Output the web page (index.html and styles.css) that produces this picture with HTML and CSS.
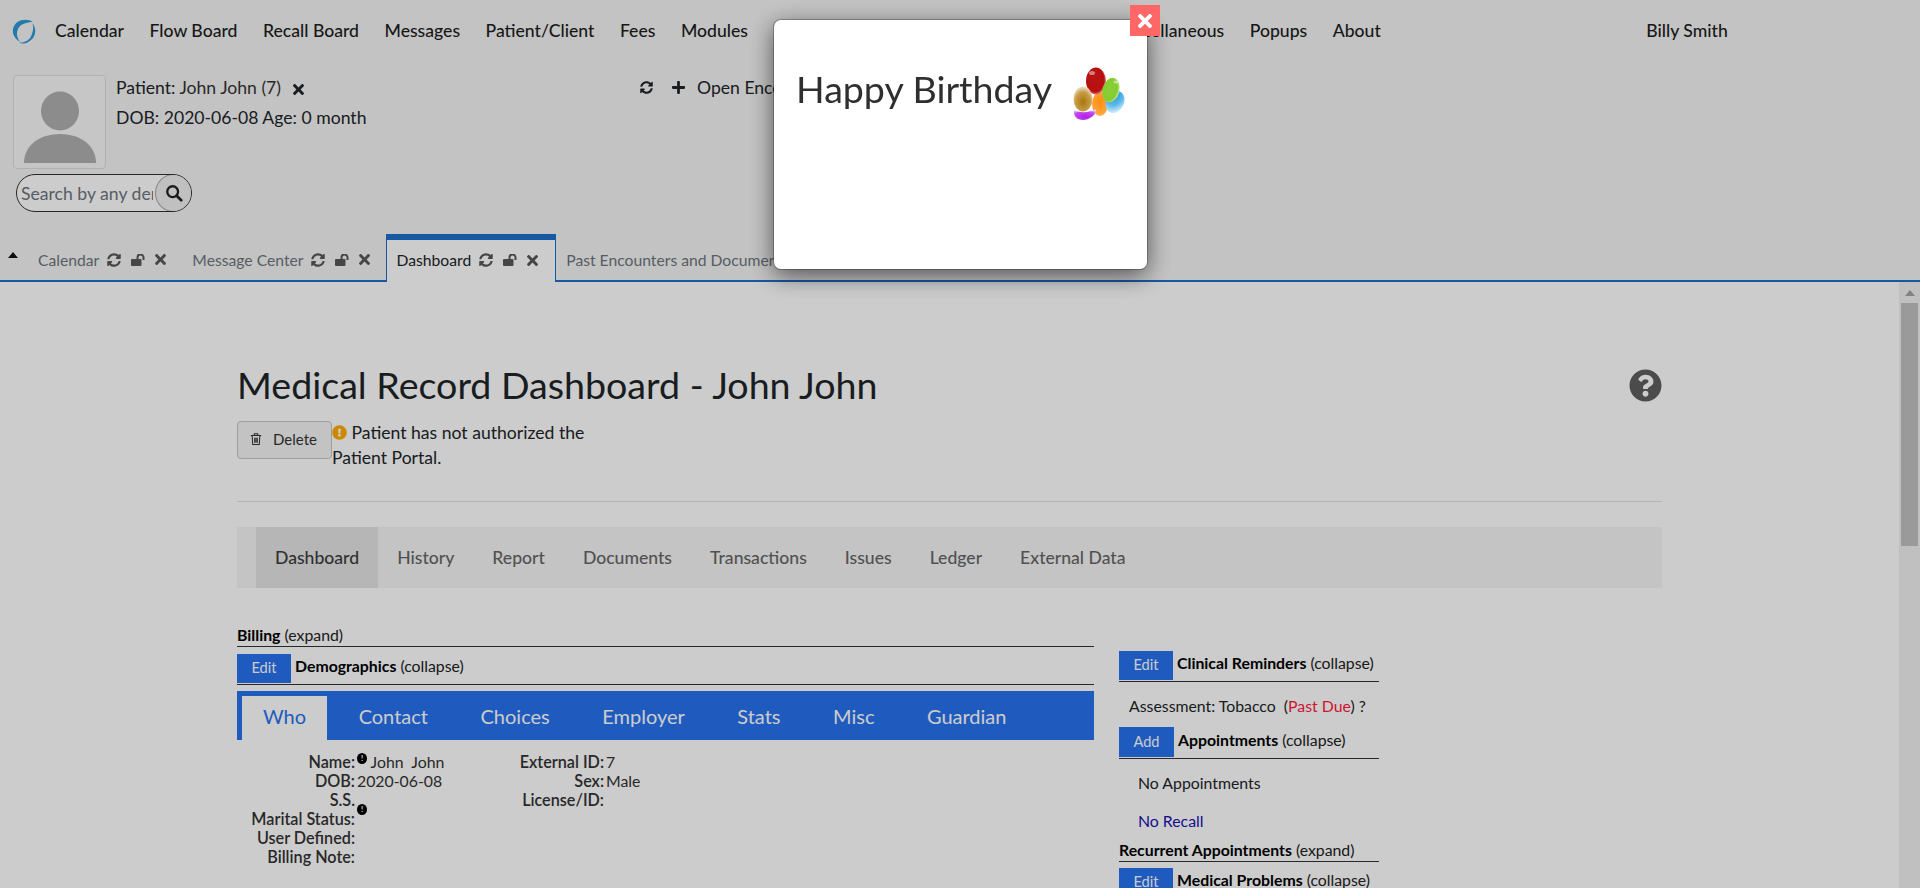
FILE: index.html
```html
<!DOCTYPE html>
<html lang="en">
<head>
    <meta charset="UTF-8">
    <meta name="viewport" content="width=device-width, initial-scale=1.0">
    <title>OpenEMR</title>
    <link rel="stylesheet" href="styles.css">
</head>
<body>
    <svg class="icon-defs" width="0" height="0">
        <symbol id="i-times" viewBox="0 80 352 352"><path d="M242.72 256l100.07-100.07c12.28-12.28 12.28-32.19 0-44.48l-22.24-22.24c-12.28-12.28-32.19-12.28-44.48 0L176 189.28 75.93 89.21c-12.28-12.28-32.19-12.28-44.48 0L9.21 111.45c-12.28 12.28-12.28 32.19 0 44.48L109.28 256 9.21 356.07c-12.28 12.28-12.28 32.19 0 44.48l22.24 22.24c12.28 12.28 32.2 12.28 44.48 0L176 322.72l100.07 100.07c12.28 12.28 32.2 12.28 44.48 0l22.24-22.24c12.28-12.28 12.28-32.19 0-44.48L242.72 256z"/></symbol>
        <symbol id="i-sync" viewBox="0 0 512 512"><path d="M370.72 133.28C339.458 104.008 298.888 87.962 255.848 88c-77.458.068-144.328 53.178-162.791 126.85-1.344 5.363-6.122 9.15-11.651 9.15H24.103c-7.498 0-13.194-6.807-11.807-14.176C33.933 94.924 134.813 8 256 8c66.448 0 126.791 26.136 171.315 68.685L463.03 40.97C478.149 25.851 504 36.559 504 57.941V192c0 13.255-10.745 24-24 24H345.941c-21.382 0-32.09-25.851-16.971-40.971l41.75-41.749zM32 296h134.059c21.382 0 32.09 25.851 16.971 40.971l-41.75 41.75c31.262 29.273 71.835 45.319 114.876 45.28 77.418-.07 144.315-53.144 162.787-126.849 1.344-5.363 6.122-9.15 11.651-9.15h57.304c7.498 0 13.194 6.807 11.807 14.176C478.067 417.076 377.187 504 256 504c-66.448 0-126.791-26.136-171.315-68.685L48.97 471.03C33.851 486.149 8 475.441 8 454.059V320c0-13.255 10.745-24 24-24z"/></symbol>
        <symbol id="i-unlock" viewBox="0 0 15 12"><rect x="0" y="5" width="10.500" height="7" rx="1"/><path d="M6.500 5.500V3.500a3 3 0 0 1 6 0V6" fill="none" stroke="currentColor" stroke-width="2"/></symbol>
        <symbol id="i-plus" viewBox="0 32 448 448"><path d="M416 208H272V64c0-17.670-14.330-32-32-32h-32c-17.670 0-32 14.330-32 32v144H32c-17.670 0-32 14.330-32 32v32c0 17.670 14.330 32 32 32h144v144c0 17.670 14.330 32 32 32h32c17.670 0 32-14.330 32-32V304h144c17.670 0 32-14.330 32-32v-32c0-17.670-14.330-32-32-32z"/></symbol>
        <symbol id="i-help" viewBox="0 0 512 512"><path d="M504 256c0 136.997-111.043 248-248 248S8 392.997 8 256C8 119.083 119.043 8 256 8s248 111.083 248 248zM262.655 90c-54.497 0-89.255 22.957-116.549 63.758-3.536 5.286-2.353 12.415 2.715 16.258l34.699 26.31c5.205 3.947 12.621 3.008 16.665-2.122 17.864-22.658 30.113-35.797 57.303-35.797 20.429 0 45.698 13.148 45.698 32.958 0 14.976-12.363 22.667-32.534 33.976C247.128 238.528 216 254.941 216 296v4c0 6.627 5.373 12 12 12h56c6.627 0 12-5.373 12-12v-1.333c0-28.462 83.186-29.647 83.186-106.667 0-58.002-60.165-102-116.531-102zM256 338c-25.365 0-46 20.635-46 46 0 25.364 20.635 46 46 46s46-20.636 46-46c0-25.365-20.635-46-46-46z"/></symbol>
        <symbol id="i-warn" viewBox="0 0 512 512"><path d="M504 256c0 136.997-111.043 248-248 248S8 392.997 8 256C8 119.083 119.043 8 256 8s248 111.083 248 248zm-248 50c-25.405 0-46 20.595-46 46s20.595 46 46 46 46-20.595 46-46-20.595-46-46-46zm-43.673-165.346l7.418 136c.347 6.364 5.609 11.346 11.982 11.346h48.546c6.373 0 11.635-4.982 11.982-11.346l7.418-136c.375-6.874-5.098-12.654-11.982-12.654h-63.383c-6.884 0-12.356 5.780-11.981 12.654z"/></symbol>
    </svg>

    <div class="app">
        <nav class="top-nav">
            <svg class="logo" viewBox="0 0 26 26" width="26" height="26">
                <path d="M21 4C14-.5 3 2 1 11c-1 6 3 11 7 13-3-4-4-9-2-13 2-5 9-7 15-7z" fill="#2b9ad8"/>
                <path d="M20.500 5c4.500 6 4 15-5 19.500-3 1.500-6 1-8.500 0 5 .5 10-2 12-6 2-4 3-9 1.500-13.500z" fill="#2b9ad8"/>
            </svg>
            <a>Calendar</a>
            <a>Flow Board</a>
            <a>Recall Board</a>
            <a>Messages</a>
            <a>Patient/Client</a>
            <a>Fees</a>
            <a>Modules</a>
            <a>Procedures</a>
            <a>Administration</a>
            <a>Reports</a>
            <a class="misc-link">Miscellaneous</a>
            <a>Popups</a>
            <a>About</a>
            <a class="user-name">Billy Smith</a>
        </nav>

        <section class="patient-bar">
            <div class="patient-left">
                <div class="patient-card">
                    <div class="avatar">
                        <svg viewBox="0 0 90 90" width="90" height="90">
                            <ellipse cx="45" cy="35" rx="19" ry="19.500" fill="#afafaf"/>
                            <path d="M9 87c0-18 16-29 36-29s36 11 36 29z" fill="#afafaf"/>
                        </svg>
                    </div>
                    <div class="patient-info">
                        <div class="patient-line">Patient: <span class="muted">John John (7)</span>
                            <svg class="ico ico-x"><use href="#i-times"/></svg>
                        </div>
                        <div class="patient-line">DOB: 2020-06-08 Age: 0 month</div>
                    </div>
                </div>
                <div class="search-box">
                    <input class="search-input" type="text" placeholder="Search by any demographics">
                    <span class="search-btn">
                        <svg viewBox="0 0 20 20" width="18" height="18"><circle cx="8.500" cy="8.500" r="6" fill="none" stroke="#222" stroke-width="2.600"/><path d="M13 13l5 5" stroke="#222" stroke-width="3" stroke-linecap="round"/></svg>
                    </span>
                </div>
            </div>
            <div class="encounter-tools">
                <svg class="ico ico-tool ico-refresh"><use href="#i-sync"/></svg>
                <svg class="ico ico-tool"><use href="#i-plus"/></svg>
                <span>Open Encounter</span>
            </div>
        </section>

        <div class="tab-strip">
            <span class="caret"></span>
            <div class="frame-tab">Calendar
                <svg class="ico"><use href="#i-sync"/></svg>
                <svg class="ico ico-lock"><use href="#i-unlock"/></svg>
                <svg class="ico ico-close"><use href="#i-times"/></svg>
            </div>
            <div class="frame-tab">Message Center
                <svg class="ico"><use href="#i-sync"/></svg>
                <svg class="ico ico-lock"><use href="#i-unlock"/></svg>
                <svg class="ico ico-close"><use href="#i-times"/></svg>
            </div>
            <div class="frame-tab active">Dashboard
                <svg class="ico"><use href="#i-sync"/></svg>
                <svg class="ico ico-lock"><use href="#i-unlock"/></svg>
                <svg class="ico ico-close"><use href="#i-times"/></svg>
            </div>
            <div class="frame-tab">Past Encounters and Documents</div>
        </div>

        <div class="frame">
            <main class="content">
                <div class="container">
                    <div class="page-head">
                        <h1>Medical Record Dashboard - John John</h1>
                        <svg class="help-icon"><use href="#i-help"/></svg>
                    </div>
                    <div class="action-row">
                        <button class="btn-delete">
                            <svg viewBox="0 0 14 16" width="12" height="14"><path d="M1 4h12M5 4V2h4v2M2.500 4l.7 10.500h7.600l.7-10.500M5.500 6.500v6M7 6.500v6M8.500 6.500v6" fill="none" stroke="#333" stroke-width="1.200"/></svg>
                            Delete
                        </button>
                        <p class="portal-note"><svg class="warn-icon"><use href="#i-warn"/></svg> Patient has not authorized the Patient Portal.</p>
                    </div>
                    <hr class="rule">
                    <div class="pill-bar">
                        <a class="active">Dashboard</a>
                        <a>History</a>
                        <a>Report</a>
                        <a>Documents</a>
                        <a>Transactions</a>
                        <a>Issues</a>
                        <a>Ledger</a>
                        <a>External Data</a>
                    </div>

                    <div class="dash-columns">
                        <div class="dash-left">
                            <div class="section-head plain"><b>Billing</b> (expand)</div>
                            <div class="section-head demo-head"><span class="btn-blue">Edit</span><b>Demographics</b> (collapse)</div>
                            <div class="demo-tabs">
                                <a class="active">Who</a>
                                <a>Contact</a>
                                <a>Choices</a>
                                <a>Employer</a>
                                <a>Stats</a>
                                <a>Misc</a>
                                <a>Guardian</a>
                            </div>
                            <div class="demo-body">
                                <dl class="fields fields-a">
                                    <dt>Name:</dt><dd><span class="dot dot-name">!</span> John&nbsp; John</dd>
                                    <dt>DOB:</dt><dd>2020-06-08</dd>
                                    <dt>S.S.</dt><dd></dd>
                                    <dt>Marital Status:</dt><dd><span class="dot dot-marital">!</span></dd>
                                    <dt>User Defined:</dt><dd></dd>
                                    <dt>Billing Note:</dt><dd></dd>
                                </dl>
                                <dl class="fields fields-b">
                                    <dt>External ID:</dt><dd>7</dd>
                                    <dt>Sex:</dt><dd>Male</dd>
                                    <dt>License/ID:</dt><dd></dd>
                                </dl>
                            </div>
                        </div>
                        <div class="dash-right">
                            <div class="section-head"><span class="btn-blue">Edit</span><b>Clinical Reminders</b> (collapse)</div>
                            <div class="reminder">Assessment: Tobacco&nbsp; (<span class="past-due">Past Due</span>) ?</div>
                            <div class="section-head appt-head"><span class="btn-blue tall">Add</span><b>Appointments</b> (collapse)</div>
                            <div class="appt">No Appointments</div>
                            <div class="appt recall">No Recall</div>
                            <div class="section-head plain recurrent"><b>Recurrent Appointments</b> (expand)</div>
                            <div class="section-head problems"><span class="btn-blue">Edit</span><b>Medical Problems</b> (collapse)</div>
                        </div>
                    </div>
                </div>
            </main>
            <div class="scrollbar">
                <span class="scroll-up"></span>
                <span class="scroll-thumb"></span>
            </div>
        </div>
    </div>

    <div class="overlay"></div>

    <div class="modal">
        <span class="modal-close"><svg class="ico"><use href="#i-times"/></svg></span>
        <h2>Happy Birthday</h2>
        <svg class="balloons" viewBox="0 0 54 54" width="54" height="54">
            <defs>
                <radialGradient id="b-red" cx=".45" cy=".45" r=".62"><stop offset="0" stop-color="#b81414"/><stop offset=".72" stop-color="#b80f0f"/><stop offset="1" stop-color="#f0c0c0"/></radialGradient>
                <radialGradient id="b-green" cx=".4" cy=".5" r=".65"><stop offset="0" stop-color="#88d032"/><stop offset=".7" stop-color="#84cc34"/><stop offset="1" stop-color="#e4f8c8"/></radialGradient>
                <radialGradient id="b-blue" cx=".3" cy=".2" r=".95"><stop offset="0" stop-color="#1c8fd8"/><stop offset=".55" stop-color="#62bcec"/><stop offset="1" stop-color="#f4fbff"/></radialGradient>
                <radialGradient id="b-orange" cx=".5" cy=".4" r=".7"><stop offset="0" stop-color="#ff8c10"/><stop offset=".75" stop-color="#ffa53a"/><stop offset="1" stop-color="#ffe8cc"/></radialGradient>
                <radialGradient id="b-tan" cx=".5" cy=".62" r=".66"><stop offset="0" stop-color="#a8740c"/><stop offset=".6" stop-color="#c89c48"/><stop offset="1" stop-color="#f6f0e4"/></radialGradient>
                <radialGradient id="b-purple" cx=".5" cy=".7" r=".7"><stop offset="0" stop-color="#b41ce8"/><stop offset=".7" stop-color="#c04cf0"/><stop offset="1" stop-color="#ecccfa"/></radialGradient>
            </defs>
            <ellipse cx="28" cy="37" rx="8" ry="12" fill="url(#b-orange)"/>
            <ellipse cx="43" cy="35" rx="9" ry="11.500" fill="url(#b-blue)" transform="rotate(25 43 35)"/>
            <ellipse cx="24" cy="14" rx="10" ry="13.500" fill="url(#b-red)"/>
            <ellipse cx="39" cy="23" rx="8.500" ry="12.500" fill="url(#b-green)" transform="rotate(15 39 23)"/>
            <path d="M2 43c5 3 15 3 22-1 1 6-7 11-13 11S1 49 2 43z" fill="url(#b-purple)"/>
            <ellipse cx="11" cy="32" rx="9.500" ry="12.500" fill="url(#b-tan)"/>
            <ellipse cx="20" cy="6" rx="3" ry="2" fill="#ffffff" opacity=".45"/>
            <ellipse cx="44" cy="15" rx="2.500" ry="1.500" fill="#ffffff" opacity=".5"/>
        </svg>
    </div>
</body>
</html>
```

FILE: styles.css
```css
* {
    box-sizing: border-box;
}

html, body {
    height: 100%;
}

body {
    margin: 0;
    overflow: hidden;
    background: #ffffff;
    color: #212529;
    font-family: Lato, "Open Sans", sans-serif;
    font-size: 17.6px;
}

.icon-defs {
    display: block;
    height: 0;
}

.ico {
    width: 14px;
    height: 14px;
    fill: currentColor;
    flex: none;
}

.app {
    display: flex;
    flex-direction: column;
    height: 100vh;
    background: #f4f4f4;
}

/* top menu */
.top-nav {
    display: flex;
    align-items: center;
    gap: 25.5px;
    height: 62px;
    padding: 0 0 1px 12px;
    flex: none;
    font-weight: 500;
    color: #1d1d1d;
}

.logo {
    margin-right: -8.500px;
}

.misc-link {
    margin-left: 3px;
}

.user-name {
    margin-left: 240px;
}

/* patient bar */
.patient-bar {
    display: flex;
    height: 172px;
    padding: 13px 0 0 13px;
    flex: none;
}

.patient-left {
    width: 627px;
}

.patient-card {
    display: flex;
    gap: 10px;
}

.avatar {
    display: flex;
    align-items: flex-end;
    justify-content: center;
    width: 93px;
    height: 94px;
    padding-bottom: 2px;
    background: #f8f8f8;
    border: 1px solid #dedede;
    border-radius: 4px;
}

.patient-info {
    padding-top: 1px;
}

.patient-line {
    height: 30px;
    line-height: 24px;
}

.muted {
    color: #333333;
}

.ico-x {
    width: 11px;
    height: 11px;
    margin-left: 7px;
    vertical-align: -1px;
}

.search-box {
    position: relative;
    width: 176px;
    height: 38px;
    margin: 5px 0 0 3px;
    border: 1px solid #333333;
    border-radius: 19px;
    overflow: hidden;
    background: #ffffff;
}

.search-input {
    width: 136px;
    height: 36px;
    padding: 0 0 0 4px;
    border: 0;
    outline: 0;
    background: transparent;
    font-family: inherit;
    font-size: 17.6px;
}

.search-input::placeholder {
    color: #6c757d;
    opacity: 1;
}

.search-btn {
    position: absolute;
    top: -1px;
    right: -1px;
    display: flex;
    align-items: center;
    justify-content: center;
    width: 37px;
    height: 38px;
    background: #f0f0f0;
    border: 1px solid #a5a5a5;
    border-radius: 50%;
}

.encounter-tools {
    display: flex;
    align-items: center;
    gap: 12px;
    height: 24px;
}

.ico-tool {
    width: 13px;
    height: 13px;
}

.ico-refresh {
    margin-right: 7px;
}

/* frame tabs */
.tab-strip {
    display: flex;
    align-items: flex-end;
    height: 48px;
    flex: none;
    border-bottom: 2px solid #1d6fcb;
    font-size: 15.7px;
}

.caret {
    width: 0;
    height: 0;
    margin: 0 10px 22px 8px;
    border: 5px solid transparent;
    border-top: 0;
    border-bottom: 6px solid #111111;
}

.frame-tab {
    display: flex;
    align-items: center;
    gap: 8px;
    height: 46px;
    padding: 5px 16px 0 10px;
    color: #6c757d;
    white-space: nowrap;
}

.frame-tab .ico {
    color: #585858;
}

.frame-tab .ico-lock {
    width: 15px;
    height: 12px;
    margin: 0 1px 0 2px;
}

.frame-tab .ico-close {
    width: 11px;
    height: 11px;
}

.frame-tab.active {
    height: 48px;
    margin-bottom: -2px;
    padding: 0 17px 2px 9px;
    background: #ffffff;
    color: #212529;
    border: 1px solid #1d6fcb;
    border-top: 6px solid #1d6fcb;
    border-bottom: 0;
}

/* frame content */
.frame {
    display: flex;
    flex: 1;
    min-height: 0;
    background: #ffffff;
}

.content {
    flex: 1;
    min-width: 0;
    overflow: hidden;
}

.container {
    width: 1425px;
    margin: 0 auto;
    padding-top: 81px;
}

.page-head {
    display: flex;
    align-items: center;
    justify-content: space-between;
}

h1 {
    margin: 0;
    font-size: 37.6px;
    font-weight: 400;
    line-height: 44px;
}

.help-icon {
    width: 33px;
    height: 33px;
    fill: #5e5e5e;
}

.action-row {
    display: flex;
    margin-top: 14px;
}

.btn-delete {
    display: flex;
    align-items: center;
    gap: 11px;
    width: 95px;
    height: 38px;
    padding: 0 12px 2px;
    border: 1px solid #c6c6c6;
    border-radius: 4px;
    background: #f4f4f4;
    color: #333333;
    font-family: inherit;
    font-size: 15px;
}

.portal-note {
    width: 256px;
    margin: -1px 0 0;
    line-height: 25px;
}

.warn-icon {
    width: 15px;
    height: 15px;
    fill: #ffaa00;
    vertical-align: -1px;
}

.rule {
    height: 1px;
    margin: 31px 0 25px;
    border: 0;
    background: #e2e2e2;
}

.pill-bar {
    display: flex;
    height: 61px;
    padding-left: 19px;
    background: #f6f6f6;
    color: #666666;
    font-weight: 500;
}

.pill-bar a {
    display: flex;
    align-items: center;
    padding: 0 19px;
}

.pill-bar a.active {
    background: #e4e4e4;
    color: #3c3c3c;
}

/* dashboard columns */
.dash-columns {
    display: flex;
    gap: 25px;
    margin-top: 38px;
    font-size: 15.84px;
}

.dash-left {
    width: 857px;
}

.dash-right {
    width: 260px;
    margin-top: 25px;
}

.section-head {
    display: flex;
    align-items: flex-start;
    gap: 4px;
    padding-bottom: 1px;
    border-bottom: 1px solid #333333;
    color: #222222;
    line-height: 24px;
}

.section-head b {
    font-weight: 700;
    color: #000000;
}

.section-head.plain {
    display: block;
    height: 21px;
    padding: 0;
    line-height: 18px;
}

.demo-head {
    margin-top: 7px;
}

.appt-head {
    line-height: 26px;
}

.section-head.recurrent {
    height: 22px;
    margin-top: 5px;
    line-height: 19px;
}

.problems {
    margin-top: 6px;
}

.btn-blue {
    display: flex;
    align-items: center;
    justify-content: center;
    width: 54px;
    height: 29px;
    padding-bottom: 1px;
    background: #2772ef;
    color: #ffffff;
    font-size: 14.6px;
}

.btn-blue.tall {
    width: 55px;
    height: 30px;
}

.demo-tabs {
    display: flex;
    height: 49px;
    margin-top: 6px;
    padding: 5px 0 0 5px;
    background: #2772ef;
    color: #ffffff;
    font-size: 20px;
}

.demo-tabs a {
    display: flex;
    align-items: center;
    margin-right: 10.500px;
    padding: 0 21px 5px;
}

.demo-tabs a.active {
    background: #ffffff;
    color: #2772ef;
}

.demo-body {
    display: flex;
    margin-top: 12px;
}

.fields {
    display: grid;
    grid-auto-rows: 19px;
    column-gap: 2px;
    margin: 0;
    line-height: 19px;
}

.fields-a {
    grid-template-columns: 118px 138px;
}

.fields-b {
    grid-template-columns: 109px 100px;
}

.fields dt {
    text-align: right;
    font-size: 16.2px;
    font-weight: 600;
    white-space: nowrap;
    color: #333333;
}

.fields dd {
    margin: 0;
    color: #333333;
}

.dot {
    display: inline-block;
    width: 10px;
    height: 11px;
    border-radius: 50%;
    background: #000000;
    color: #ffffff;
    font-size: 8px;
    font-weight: 700;
    line-height: 11px;
    text-align: center;
    vertical-align: 5px;
}

.dot-name {
    transform: translateY(-2px);
}

.dot-marital {
    transform: translateY(-8px);
}

.reminder {
    height: 45px;
    padding: 12px 0 0 10px;
    line-height: 24px;
}

.past-due {
    color: #ff1a3a;
}

.appt {
    height: 38px;
    padding: 12px 0 0 19px;
    line-height: 24px;
}

.recall {
    color: #1a10b0;
}

/* scrollbar */
.scrollbar {
    display: flex;
    flex-direction: column;
    align-items: center;
    width: 21px;
    flex: none;
    background: #f1f1f1;
}

.scroll-up {
    width: 0;
    height: 0;
    margin: 8px 0 7px;
    border: 5px solid transparent;
    border-top: 0;
    border-bottom: 6px solid #a3a3a3;
}

.scroll-thumb {
    width: 17px;
    height: 243px;
    background: #c1c1c1;
}

/* birthday popup */
.overlay {
    position: fixed;
    inset: 0;
    background: rgba(0, 0, 0, 0.2);
}

.modal {
    position: fixed;
    top: 20px;
    left: 774px;
    display: flex;
    align-items: flex-start;
    gap: 20px;
    width: 373px;
    height: 249px;
    padding: 43px 0 0 22px;
    background: #ffffff;
    border-radius: 7px;
    box-shadow: 0 0 0 1px rgba(0, 0, 0, 0.25), 0 6px 24px rgba(0, 0, 0, 0.6);
}

.modal h2 {
    margin: 0;
    font-size: 37.6px;
    font-weight: 400;
    line-height: 52px;
    color: #2f2f2f;
    white-space: nowrap;
}

.balloons {
    margin-top: 4px;
    flex: none;
}

.modal-close {
    position: absolute;
    top: -15px;
    left: 356px;
    display: flex;
    align-items: center;
    justify-content: center;
    width: 30px;
    height: 31px;
    background: #ff6666;
    color: #ffffff;
}
```
